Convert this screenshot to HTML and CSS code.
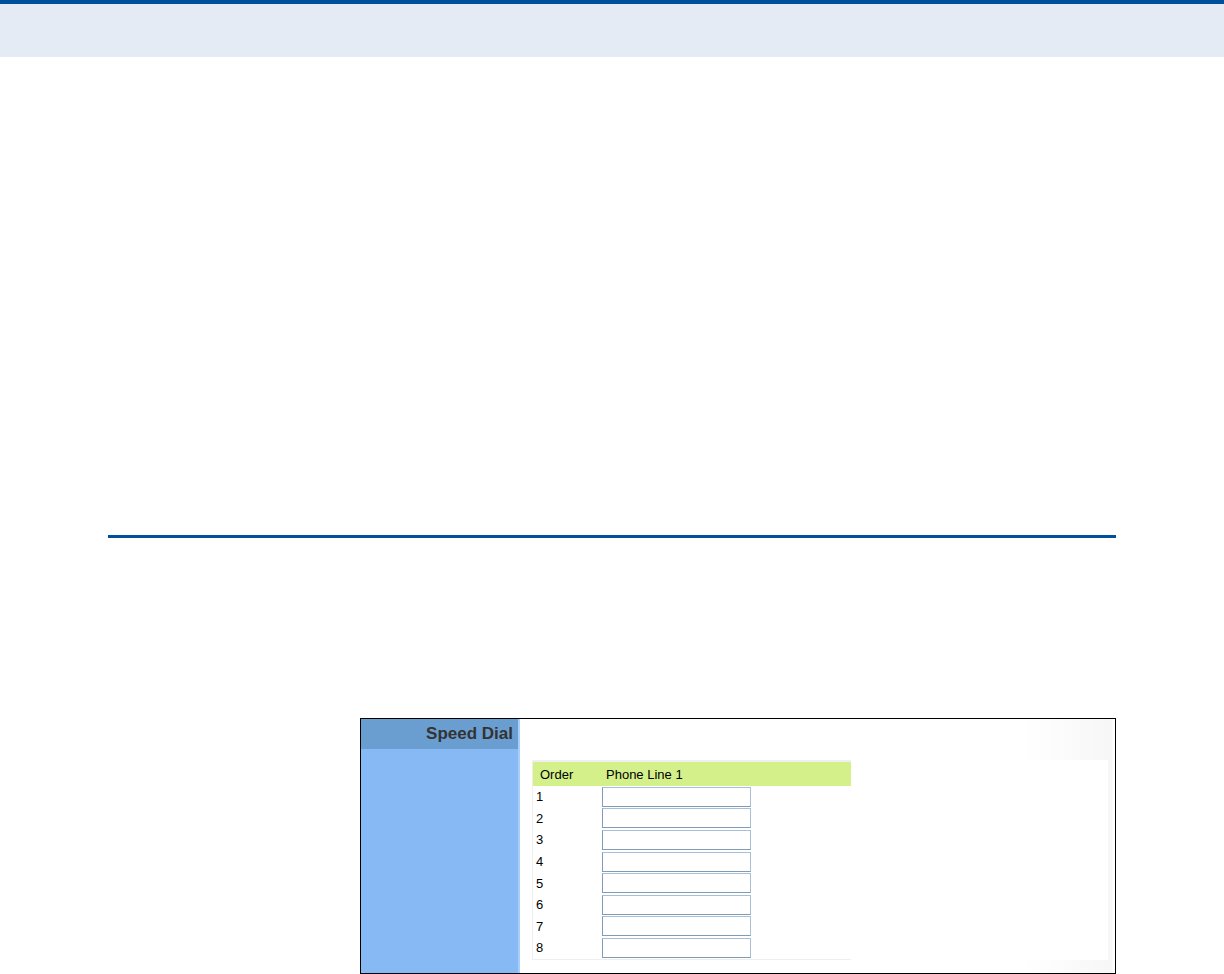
FILE: index.html
```html
<!DOCTYPE html>
<html>
<head>
<meta charset="utf-8">
<link rel="stylesheet" href="styles.css">
</head>
<body>
<div class="topband"></div>
<div class="rule"></div>
<div class="shot">
  <div class="side">
    <div class="side-head">Speed Dial</div>
  </div>
  <div class="main">
    <div class="panel">
      <div class="tbl">
        <div class="thead"><span class="c1">Order</span><span class="c2">Phone Line 1</span></div>
        <div class="row"><span class="c1">1</span><span class="box"></span></div>
        <div class="row"><span class="c1">2</span><span class="box"></span></div>
        <div class="row"><span class="c1">3</span><span class="box"></span></div>
        <div class="row"><span class="c1">4</span><span class="box"></span></div>
        <div class="row"><span class="c1">5</span><span class="box"></span></div>
        <div class="row"><span class="c1">6</span><span class="box"></span></div>
        <div class="row"><span class="c1">7</span><span class="box"></span></div>
        <div class="row"><span class="c1">8</span><span class="box"></span></div>
      </div>
    </div>
  </div>
</div>
</body>
</html>
```

FILE: styles.css
```css
html, body {
  margin: 0;
  padding: 0;
  background: #ffffff;
  font-family: "Liberation Sans", Arial, sans-serif;
  overflow: hidden;
}

.topband {
  height: 53px;
  border-top: 4px solid #004f9b;
  background: #e4ebf4;
}

.rule {
  margin: 478px 0 0 108px;
  width: 1008px;
  height: 3px;
  background: #004f9b;
}

.shot {
  margin: 180px 0 0 360px;
  width: 754px;
  height: 254px;
  border: 1px solid #000;
  display: flex;
}

.side {
  width: 157px;
  background: #87baf4;
  border-right: 2px solid #a6cffc;
}

.side-head {
  height: 30px;
  background: #6a9ed0;
  color: #333333;
  font-weight: bold;
  font-size: 17px;
  line-height: 30px;
  text-align: right;
  padding-right: 5px;
}

.main {
  flex: 1;
  background: linear-gradient(to right, #ffffff 0, #ffffff 500px, #f7f7f7 592px, #ffffff 593px);
  padding-top: 41px;
}

.panel {
  width: 588px;
  height: 200px;
  background: #ffffff;
}

.tbl {
  margin-left: 12px;
  width: 318px;
  border-left: 1px solid #efefef;
  border-top: 2px solid #efefef;
  border-bottom: 1px solid #efefef;
  font-size: 13px;
  color: #000;
}

.thead {
  height: 24px;
  background: #d4f08a;
  display: flex;
  align-items: center;
}

.thead .c1 {
  width: 66px;
  padding-left: 7px;
}

.row {
  height: 21.6px;
  display: flex;
  align-items: center;
}

.row .c1 {
  width: 66px;
  padding-left: 3px;
}

.box {
  width: 147px;
  height: 18px;
  border: 1px solid #a9bfd6;
  border-left-color: #7f9db9;
  border-bottom-color: #7f9db9;
  background: #fff;
}
```
